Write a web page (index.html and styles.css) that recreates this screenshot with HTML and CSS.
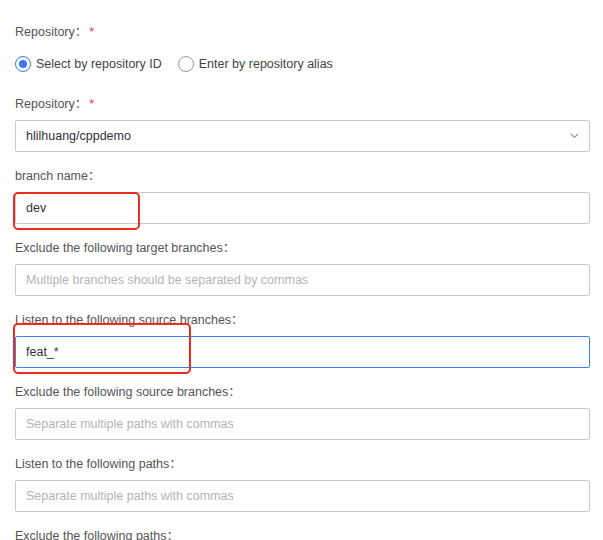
FILE: index.html
```html
<!DOCTYPE html>
<html>
<head>
<meta charset="utf-8">
<link rel="stylesheet" href="styles.css">
</head>
<body>
<div class="form">
  <div class="label first">Repository：<span class="req">*</span></div>
  <div class="radios">
    <label class="radio"><span class="dot checked"></span>Select by repository ID</label>
    <label class="radio"><span class="dot"></span>Enter by repository alias</label>
  </div>

  <div class="label">Repository：<span class="req">*</span></div>
  <div class="field select">
    <span class="value">hlilhuang/cppdemo</span>
    <svg class="chev" width="9" height="6" viewBox="0 0 9 6"><path d="M1 1 L4.5 4.5 L8 1" fill="none" stroke="#999" stroke-width="1.2"/></svg>
  </div>

  <div class="label">branch name：</div>
  <div class="wrap">
    <div class="field"><span class="value">dev</span></div>
    <div class="mark mark-dev"></div>
  </div>

  <div class="label">Exclude the following target branches：</div>
  <div class="field"><span class="ph">Multiple branches should be separated by commas</span></div>

  <div class="label">Listen to the following source branches：</div>
  <div class="wrap">
    <div class="field focus"><span class="value">feat_*</span></div>
    <div class="mark mark-feat"></div>
  </div>

  <div class="label">Exclude the following source branches：</div>
  <div class="field"><span class="ph">Separate multiple paths with commas</span></div>

  <div class="label">Listen to the following paths：</div>
  <div class="field"><span class="ph">Separate multiple paths with commas</span></div>

  <div class="label">Exclude the following paths：</div>
</div>
</body>
</html>
```
FILE: styles.css
```css
html, body {
  margin: 0;
  padding: 0;
  background: #fff;
}
body {
  font-family: "Liberation Sans", "Noto Sans CJK SC", Arial, sans-serif;
  font-size: 12.5px;
  color: #333;
}
.form {
  padding: 0 13px 0 15px;
  display: flex;
  flex-direction: column;
}
.label {
  color: #555;
  height: 18px;
  line-height: 18px;
  margin-top: 15px;
  margin-bottom: 7px;
  white-space: nowrap;
}
.label.first {
  margin-top: 23px;
  margin-bottom: 0;
}
.req {
  color: #e8382b;
  margin-left: 2px;
}
.radios {
  display: flex;
  align-items: center;
  height: 18px;
  margin-top: 14px;
  margin-bottom: 7px;
}
.radio {
  display: flex;
  align-items: center;
  color: #444;
  margin-right: 16px;
  white-space: nowrap;
}
.dot {
  box-sizing: border-box;
  width: 16px;
  height: 16px;
  border-radius: 50%;
  border: 1px solid #999;
  margin-right: 5px;
  display: flex;
  align-items: center;
  justify-content: center;
}
.dot.checked {
  border-color: #3b7af0;
}
.dot.checked::after {
  content: "";
  width: 8px;
  height: 8px;
  border-radius: 50%;
  background: #3b7af0;
}
.field {
  box-sizing: border-box;
  height: 32px;
  border: 1px solid #c9c9d0;
  border-radius: 2px;
  display: flex;
  align-items: center;
  padding: 0 10px;
}
.field.focus {
  border-color: #3d7ff5;
}
.value {
  color: #333;
}
.ph {
  color: #b4b4b8;
}
.select {
  justify-content: space-between;
  padding-right: 10px;
}
.chev {
  display: block;
}
.wrap {
  position: relative;
}
.mark {
  position: absolute;
  border: 2px solid #eb2d1f;
  border-radius: 5px;
  box-sizing: border-box;
}
.mark-dev {
  left: -2px;
  top: 0;
  width: 127px;
  height: 38px;
}
.mark-feat {
  left: -2px;
  top: -13px;
  width: 178px;
  height: 51px;
}
```
